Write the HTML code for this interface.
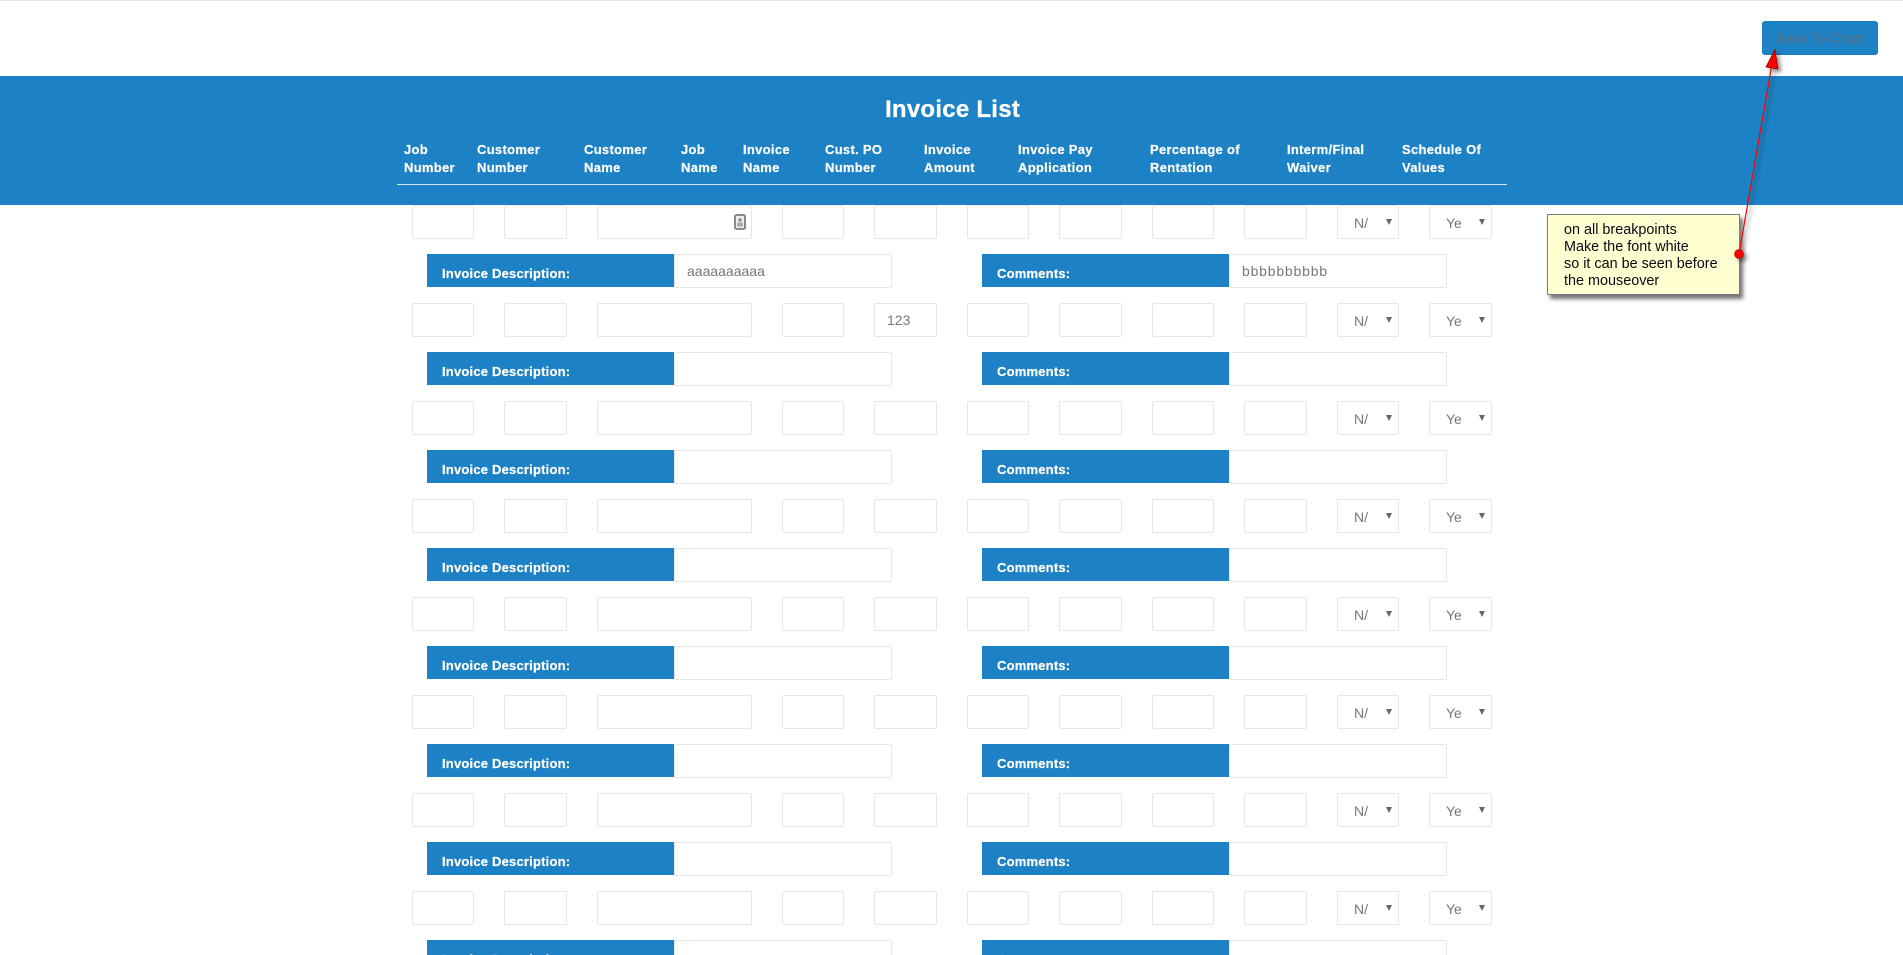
<!DOCTYPE html>
<html lang="en">
<head>
<meta charset="utf-8">
<title>Invoice List</title>
<style>
html,body{margin:0;padding:0;background:#fff;width:1903px;height:955px;overflow:hidden;}
#p{position:relative;width:1903px;height:955px;overflow:hidden;font-family:"Liberation Sans",Arial,sans-serif;}
.topline{position:absolute;left:0;top:0;width:1903px;height:1px;background:#e7e7e7;}
.btn{position:absolute;left:1762px;top:21px;width:116px;height:34px;box-sizing:border-box;background:#1d82c5;border:1px solid #1b7dbe;border-radius:3px;color:#5f6b73;font-size:14px;line-height:32px;text-align:center;}
.hdr{position:absolute;left:0;top:76px;width:1903px;height:129px;background:#1d82c5;}
.hdr h1{position:absolute;left:885px;top:17px;margin:0;font-size:24px;line-height:34px;letter-spacing:.25px;font-weight:bold;color:#fff;white-space:nowrap;-webkit-text-stroke:.3px #fff;}
.hdr span{position:absolute;top:65px;font-size:13px;line-height:18px;letter-spacing:.3px;font-weight:bold;color:#fff;white-space:nowrap;-webkit-text-stroke:.2px #fff;}
.hdr hr{position:absolute;left:397px;top:108px;width:1110px;height:1px;margin:0;border:0;background:#d8e6f0;}
.r{position:absolute;left:0;width:1903px;height:34px;}
.r>div{position:absolute;top:0;height:34px;box-sizing:border-box;border:1px solid #e7e7e7;border-radius:2px;background:#fff;color:#777;font-size:14px;line-height:33px;white-space:nowrap;overflow:hidden;}
.r>div:nth-child(1){left:412px;width:62px;}
.r>div:nth-child(2){left:504px;width:63px;}
.r>div:nth-child(3){left:597px;width:155px;}
.r>div:nth-child(4){left:782px;width:62px;}
.r>div:nth-child(5){left:874px;width:63px;}
.r>div:nth-child(6){left:967px;width:62px;}
.r>div:nth-child(7){left:1059px;width:63px;}
.r>div:nth-child(8){left:1152px;width:62px;}
.r>div:nth-child(9){left:1244px;width:63px;}
.r>div:nth-child(10){left:1337px;width:62px;}
.r>div:nth-child(11){left:1429px;width:63px;}
.r>div:nth-child(5) b{font-weight:normal;position:absolute;left:12px;top:0;}
.sel b{font-weight:normal;position:absolute;top:1px;overflow:hidden;}
.sel i{position:absolute;top:13px;width:0;height:0;border-left:3px solid transparent;border-right:3px solid transparent;border-top:6px solid #666;}
.na b{left:16px;width:14px;}
.na i{left:48px;}
.ye b{left:16px;width:16px;}
.ye i{left:49px;}
.d{position:absolute;left:0;width:1903px;height:34px;}
.lab{position:absolute;top:0;width:247px;height:33px;background:#1d82c5;color:#fff;font-size:13px;font-weight:bold;letter-spacing:.2px;line-height:40px;box-sizing:border-box;padding-left:15px;white-space:nowrap;-webkit-text-stroke:.2px #fff;}
.l1{left:427px;}
.l2{left:982px;}
.val{position:absolute;top:0;width:218px;height:34px;box-sizing:border-box;border:1px solid #e7e7e7;border-radius:2px;background:#fff;color:#777;font-size:14px;line-height:33px;padding-left:12px;white-space:nowrap;}
.v1{left:674px;}
.v2{left:1229px;}
.note{position:absolute;left:1547px;top:214px;width:193px;height:81px;box-sizing:border-box;background:#ffffd2;border:1px solid #7d7d7d;box-shadow:3px 4px 4px rgba(0,0,0,.55);color:#0a0a14;font-size:14.4px;line-height:17px;padding:7px 0 0 16px;white-space:nowrap;}
svg.ov{position:absolute;left:0;top:0;}
</style>
</head>
<body>
<div id="p">
<div class="topline"></div>
<div class="hdr">
<h1>Invoice List</h1>
<span style="left:404px">Job<br>Number</span>
<span style="left:477px">Customer<br>Number</span>
<span style="left:584px">Customer<br>Name</span>
<span style="left:681px">Job<br>Name</span>
<span style="left:743px">Invoice<br>Name</span>
<span style="left:825px">Cust. PO<br>Number</span>
<span style="left:924px">Invoice<br>Amount</span>
<span style="left:1018px">Invoice Pay<br>Application</span>
<span style="left:1150px">Percentage of<br>Rentation</span>
<span style="left:1287px">Interm/Final<br>Waiver</span>
<span style="left:1402px">Schedule Of<br>Values</span>
<hr>
</div>
<div class="btn">Back To Chart</div>

<div class="r" style="top:205px"><div></div><div></div><div><svg width="12" height="16" viewBox="0 0 12 16" style="position:absolute;left:136px;top:8px"><rect x="1" y="1" width="10" height="14" rx="1.5" fill="#eee" stroke="#888" stroke-width="2"/><circle cx="6" cy="6" r="1.7" fill="#888"/><rect x="3" y="8.5" width="6" height="4" fill="#aaa"/></svg></div><div></div><div></div><div></div><div></div><div></div><div></div><div class="sel na"><b>N/</b><i></i></div><div class="sel ye"><b>Ye</b><i></i></div></div>
<div class="d" style="top:254px"><div class="lab l1">Invoice Description:</div><div class="val v1">aaaaaaaaaa</div><div class="lab l2">Comments:</div><div class="val v2" style="letter-spacing:.8px">bbbbbbbbbb</div></div>

<div class="r" style="top:303px"><div></div><div></div><div></div><div></div><div><b>123</b></div><div></div><div></div><div></div><div></div><div class="sel na"><b>N/</b><i></i></div><div class="sel ye"><b>Ye</b><i></i></div></div>
<div class="d" style="top:352px"><div class="lab l1">Invoice Description:</div><div class="val v1"></div><div class="lab l2">Comments:</div><div class="val v2"></div></div>

<div class="r" style="top:401px"><div></div><div></div><div></div><div></div><div></div><div></div><div></div><div></div><div></div><div class="sel na"><b>N/</b><i></i></div><div class="sel ye"><b>Ye</b><i></i></div></div>
<div class="d" style="top:450px"><div class="lab l1">Invoice Description:</div><div class="val v1"></div><div class="lab l2">Comments:</div><div class="val v2"></div></div>

<div class="r" style="top:499px"><div></div><div></div><div></div><div></div><div></div><div></div><div></div><div></div><div></div><div class="sel na"><b>N/</b><i></i></div><div class="sel ye"><b>Ye</b><i></i></div></div>
<div class="d" style="top:548px"><div class="lab l1">Invoice Description:</div><div class="val v1"></div><div class="lab l2">Comments:</div><div class="val v2"></div></div>

<div class="r" style="top:597px"><div></div><div></div><div></div><div></div><div></div><div></div><div></div><div></div><div></div><div class="sel na"><b>N/</b><i></i></div><div class="sel ye"><b>Ye</b><i></i></div></div>
<div class="d" style="top:646px"><div class="lab l1">Invoice Description:</div><div class="val v1"></div><div class="lab l2">Comments:</div><div class="val v2"></div></div>

<div class="r" style="top:695px"><div></div><div></div><div></div><div></div><div></div><div></div><div></div><div></div><div></div><div class="sel na"><b>N/</b><i></i></div><div class="sel ye"><b>Ye</b><i></i></div></div>
<div class="d" style="top:744px"><div class="lab l1">Invoice Description:</div><div class="val v1"></div><div class="lab l2">Comments:</div><div class="val v2"></div></div>

<div class="r" style="top:793px"><div></div><div></div><div></div><div></div><div></div><div></div><div></div><div></div><div></div><div class="sel na"><b>N/</b><i></i></div><div class="sel ye"><b>Ye</b><i></i></div></div>
<div class="d" style="top:842px"><div class="lab l1">Invoice Description:</div><div class="val v1"></div><div class="lab l2">Comments:</div><div class="val v2"></div></div>

<div class="r" style="top:891px"><div></div><div></div><div></div><div></div><div></div><div></div><div></div><div></div><div></div><div class="sel na"><b>N/</b><i></i></div><div class="sel ye"><b>Ye</b><i></i></div></div>
<div class="d" style="top:940px"><div class="lab l1">Invoice Description:</div><div class="val v1"></div><div class="lab l2">Comments:</div><div class="val v2"></div></div>

<div class="note">on all breakpoints<br>Make the font white<br>so it can be seen before<br>the mouseover</div>
<svg class="ov" width="1903" height="955" viewBox="0 0 1903 955">
<defs><filter id="s" x="-50%" y="-10%" width="200%" height="120%"><feDropShadow dx="3" dy="3" stdDeviation="2" flood-color="#000" flood-opacity=".45"/></filter></defs>
<g filter="url(#s)">
<line x1="1739" y1="254" x2="1772" y2="64" stroke="#ff0000" stroke-width="1.2"/>
<polygon points="1775,49.5 1766,67 1778,69" fill="#ff0000" stroke="#8a0000" stroke-width=".8"/>
<circle cx="1739" cy="254" r="4.4" fill="#ff0000" stroke="#b00000" stroke-width=".7"/>
</g>
</svg>
</div>
</body>
</html>
